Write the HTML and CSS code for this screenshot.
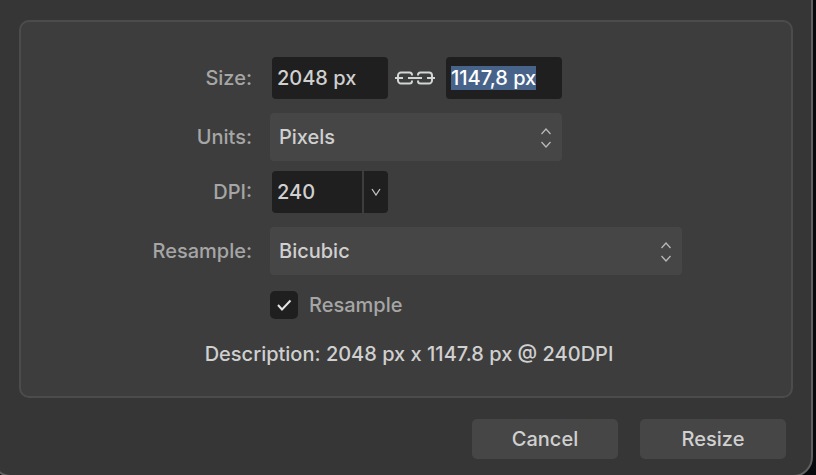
FILE: index.html
```html
<!DOCTYPE html>
<html lang="en">
<head>
  <meta charset="UTF-8" />
  <meta name="viewport" content="width=device-width, initial-scale=1.0"/>
  <title>Resize Document</title>
  <link rel="stylesheet" href="styles.css">
</head>
<body>
  <form class="dialog">
    <div class="panel">
      <div class="row row-text">
        <label for="width">Size:</label>
        <div class="fields">
          <input class="text-field" type="text" id="width" value="2048 px">
          <svg class="link-icon" width="40" height="14" viewBox="0 0 40 14" fill="none" stroke="#d2d6d4" stroke-width="2">
            <path d="M17 4.500V4a2.500 2.500 0 0 0-2.500-2.500H6A3 3 0 0 0 3 4.500v5a3 3 0 0 0 3 3h8.500A2.500 2.500 0 0 0 17 10v-.5"/>
            <path d="M23 4.500V4a2.500 2.500 0 0 1 2.500-2.500H34a3 3 0 0 1 3 3v5a3 3 0 0 1-3 3h-8.500A2.500 2.500 0 0 1 23 10v-.5"/>
            <path d="M0 7h8M13 7h14M32 7h8"/>
          </svg>
          <input class="text-field" type="text" id="height" value="1147,8 px" aria-label="Height">
        </div>
      </div>

      <div class="row">
        <label for="units">Units:</label>
        <div class="select-box">
          <select id="units">
            <option>Pixels</option>
            <option>Millimeters</option>
            <option>Inches</option>
          </select>
          <svg class="arrows" width="12" height="22" viewBox="0 0 12 22" fill="none" stroke="#b8b8b8" stroke-width="1.300">
            <path d="M1.500 8 6 3l4.500 5M1.500 16 6 21l4.500-5"/>
          </svg>
        </div>
      </div>

      <div class="row row-text">
        <label for="dpi">DPI:</label>
        <div class="combo">
          <input class="text-field" type="text" id="dpi" value="240">
          <button class="combo-button" type="button" aria-label="Choose DPI">
            <svg width="10" height="8" viewBox="0 0 10 8" fill="none" stroke="#c4c4c4" stroke-width="1.300">
              <path d="M1 1l4 6 4-6"/>
            </svg>
          </button>
        </div>
      </div>

      <div class="row">
        <label for="method">Resample:</label>
        <div class="select-box select-wide">
          <select id="method">
            <option>Bicubic</option>
            <option>Bilinear</option>
            <option>Nearest Neighbour</option>
          </select>
          <svg class="arrows" width="12" height="22" viewBox="0 0 12 22" fill="none" stroke="#b8b8b8" stroke-width="1.300">
            <path d="M1.500 8 6 3l4.500 5M1.500 16 6 21l4.500-5"/>
          </svg>
        </div>
      </div>

      <div class="row row-check">
        <div class="check">
          <input type="checkbox" id="resample" checked>
          <svg class="tick" width="16" height="14" viewBox="0 0 16 14" fill="none" stroke="#e4e4e4" stroke-width="2">
            <path d="M2 7 6 11.500 14.500 2.500"/>
          </svg>
          <label for="resample">Resample</label>
        </div>
      </div>

      <p class="description">Description: 2048 px x 1147.8 px @ 240DPI</p>
    </div>

    <div class="actions">
      <button type="button">Cancel</button>
      <button type="submit">Resize</button>
    </div>
  </form>

  <script src="script.js"></script>
</body>
</html>
```

FILE: styles.css
```css
* {
  box-sizing: border-box;
}

body {
  margin: 0;
  background: #07090d;
  color: #d0d0d0;
  font-family: Inter, "Liberation Sans", sans-serif;
  font-size: 20px;
  font-weight: 500;
  line-height: 26px;
  overflow: hidden;
}

input,
select,
button {
  font: inherit;
  color: inherit;
  border: none;
  outline: none;
}

/* the window runs past the top and left of the page */
.dialog {
  margin: -20px 3px 0 -9px;
  padding: 38px 18px 16px 26px;
  background: #363636;
  border: 2px solid #606060;
  border-radius: 20px;
}

.panel {
  display: flex;
  flex-direction: column;
  gap: 10px;
  padding: 35px 0 29px;
  background: #3d3d3d;
  border: 2px solid #4c4c4c;
  border-radius: 10px;
}

.row {
  display: grid;
  grid-template-columns: 30% 1fr;
  column-gap: 18px;
  align-items: center;
}

.row label {
  color: #a6a6a6;
  text-align: right;
}

.row-text {
  margin-bottom: 4px;
}

.fields,
.combo {
  display: flex;
  align-items: center;
  margin-left: 2px;
}

.fields {
  gap: 9px;
}

.text-field {
  width: 116px;
  height: 42px;
  padding: 0 5px;
  background: #1f1f1f;
  border-radius: 4px;
}

.text-field::selection {
  background: #486389;
  color: #ffffff;
}

.link-icon {
  margin: 0 2px 0 -2px;
}

.combo {
  gap: 2px;
}

.combo .text-field {
  width: 90px;
  border-radius: 4px 0 0 4px;
}

.combo-button {
  display: flex;
  align-items: center;
  justify-content: center;
  width: 24px;
  height: 42px;
  padding: 0;
  background: #1f1f1f;
  border-radius: 0 4px 4px 0;
}

.select-box {
  display: grid;
  align-items: center;
  width: 292px;
}

.select-wide {
  width: 412px;
}

.select-box select,
.select-box .arrows {
  grid-area: 1 / 1;
}

.select-box select {
  appearance: none;
  height: 48px;
  padding: 0 36px 0 9px;
  background: #464646;
  border-radius: 4px;
}

.arrows {
  justify-self: end;
  margin-right: 10px;
  pointer-events: none;
}

.row-check {
  margin-top: 6px;
}

.check {
  grid-column: 2;
  display: grid;
  grid-template-columns: 28px auto;
  column-gap: 11px;
  align-items: center;
  justify-content: start;
}

.check input {
  grid-area: 1 / 1;
  appearance: none;
  width: 28px;
  height: 28px;
  margin: 0;
  background: #1f1f1f;
  border-radius: 5px;
}

.check .tick {
  grid-area: 1 / 1;
  justify-self: center;
  visibility: hidden;
  pointer-events: none;
}

.check input:checked + .tick {
  visibility: visible;
}

.description {
  margin: 12px 0 0;
  padding-left: 6px;
  text-align: center;
}

.actions {
  display: flex;
  justify-content: flex-end;
  gap: 22px;
  margin-top: 21px;
  padding-right: 7px;
}

.actions button {
  width: 146px;
  height: 40px;
  padding: 0;
  background: #464646;
  border-radius: 5px;
}
```

FILE: script.js
```js
const heightField = document.getElementById("height");
heightField.focus();
heightField.select();
```
